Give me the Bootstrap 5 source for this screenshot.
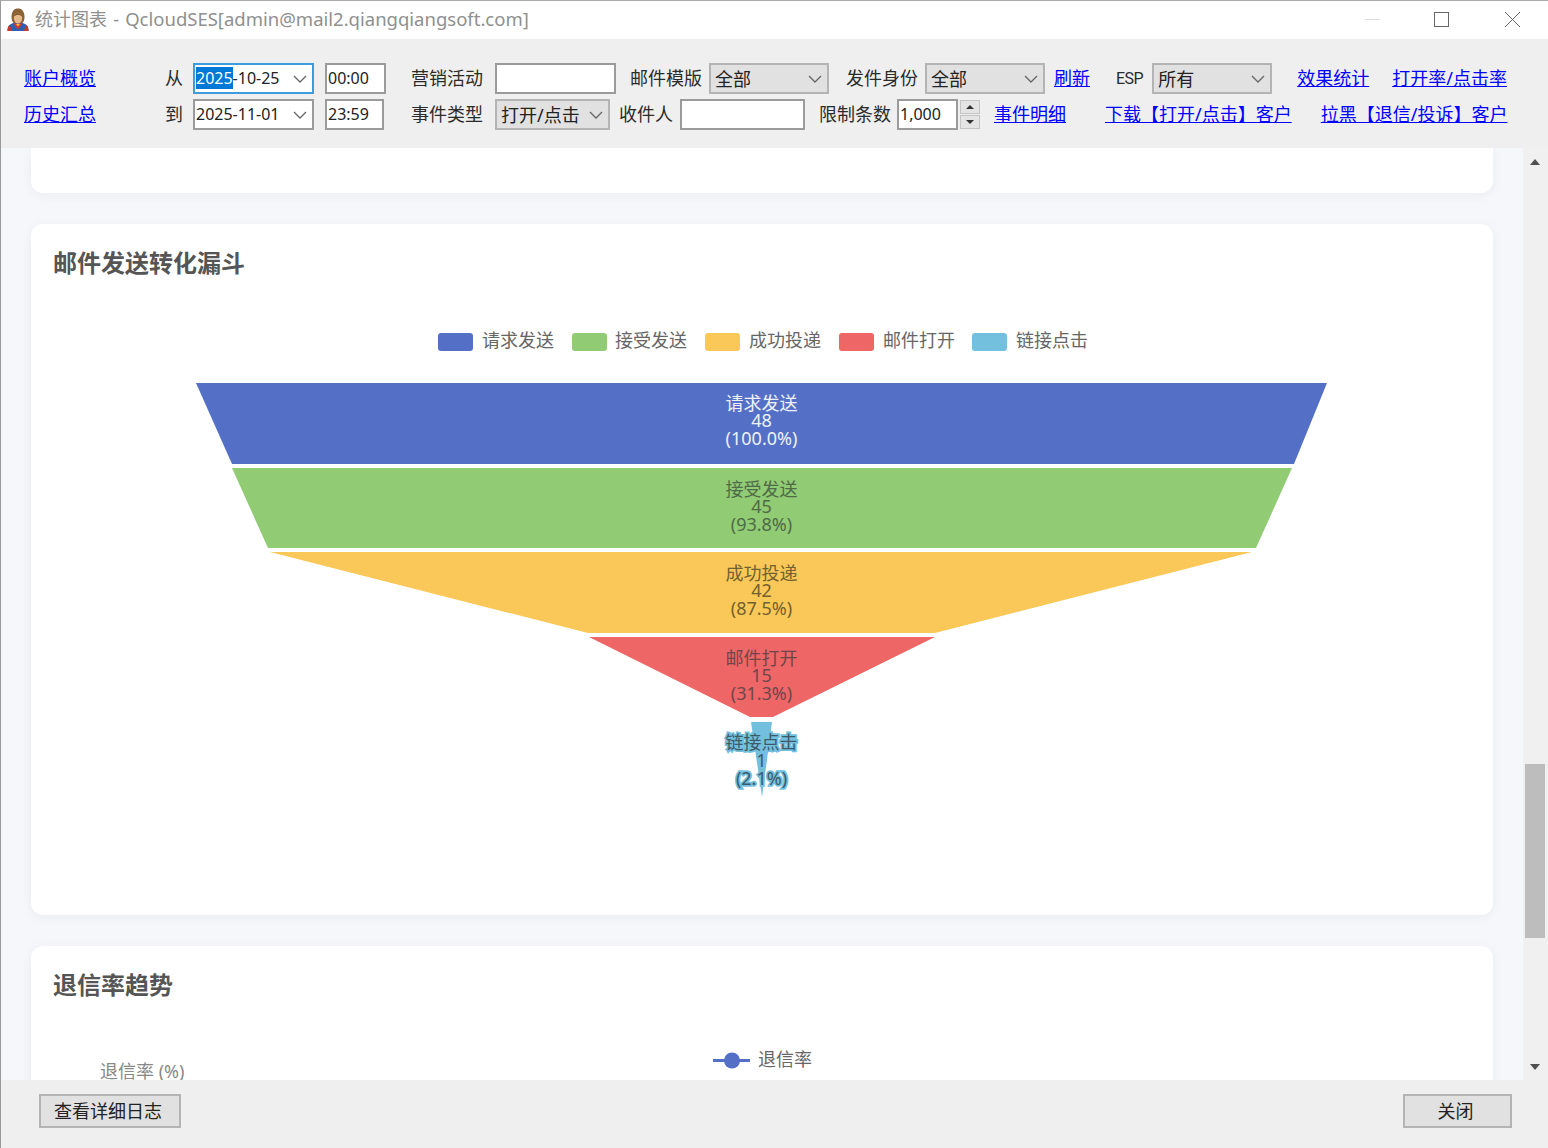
<!DOCTYPE html>
<html lang="zh-CN">
<head>
  <meta charset="UTF-8">
  <title>统计图表 - QcloudSES</title>
  <link rel="stylesheet" href="https://cdn.jsdelivr.net/npm/bootstrap@5.3.0/dist/css/bootstrap.min.css">
  <script src="https://cdn.jsdelivr.net/npm/bootstrap@5.3.0/dist/js/bootstrap.bundle.min.js"></script>
  <style>
    html, body { height: 100%; margin: 0; overflow: hidden; }
    body { font-family: "Noto Sans", "Noto Sans CJK SC", sans-serif; font-size: 18px; line-height: 1.2; color: #2b2b2b; }
    .win { width: 1548px; height: 1148px; border-left: 1px solid #999; border-top: 1px solid #aaa; }

    /* title bar */
    .titlebar { height: 38px; background: #fff; color: #8f8f8f; padding: 0 25px 0 6px; flex-shrink: 0; }
    .titlebar svg { flex-shrink: 0; }
    .app-name { margin-left: 6px; margin-bottom: 2px; word-spacing: 1.500px; }
    .app-latin { font-size: 18.500px; }
    .win-ctl { margin-left: auto; }

    /* toolbar */
    .toolbar { height: 109px; background: #efefef; padding: 24px 0 0 23px; flex-shrink: 0; }
    .tb-row { height: 31px; margin-bottom: 5px; }
    .tb-row > * { flex-shrink: 0; }
    .tb-link, .tb-link:hover { color: #0000ff; text-decoration: underline; }
    .tb-input { height: 31px; border: 2px solid #9b9b9b; background: #fff; font-size: 16px; padding: 0 1px; line-height: 27px; color: #222; box-sizing: border-box; }
    .tb-date { width: 121px; display: flex; align-items: center; justify-content: space-between; padding-right: 5px; }
    .tb-date.is-active { border-color: #3d9be0; }
    .sel-part { background: #0078d7; color: #fff; }
    .tb-select.form-select { height: 31px; border: 2px solid #b4b4b4; border-radius: 0; background-color: #e1e1e1; font-size: 18px; line-height: 27px; padding: 1px 20px 0 4px; color: #222; box-shadow: none; background-image: url("data:image/svg+xml,%3csvg xmlns='http://www.w3.org/2000/svg' viewBox='0 0 14 8'%3e%3cpath fill='none' stroke='%23666' stroke-width='1.300' d='M1 1l6 6 6-6'/%3e%3c/svg%3e"); background-size: 14px 8px; background-position: right 5px center; }
    .w59 { width: 59px; } .w61 { width: 61px; } .w115 { width: 115px !important; } .w120 { width: 120px !important; } .w121 { width: 121px; } .w125 { width: 125px; }
    .esp { font-family: Roboto, sans-serif; font-size: 16px; letter-spacing: -.5px; }
    .spin { width: 20px; height: 29px; gap: 1px; }
    .spin-btn { height: 14px; background: #e4e4e4; border: 1px solid #c4c4c4; }
    .tri-up { width: 0; height: 0; border-left: 4px solid transparent; border-right: 4px solid transparent; border-bottom: 4px solid #333; }
    .tri-down { width: 0; height: 0; border-left: 4px solid transparent; border-right: 4px solid transparent; border-top: 4px solid #333; }
    .m2 { margin-left: 2px; } .m6 { margin-left: 6px; } .m7 { margin-left: 7px; } .m8 { margin-left: 8px; } .m9 { margin-left: 9px; } .m10 { margin-left: 10px; }
    .m11 { margin-left: 11px; } .m12 { margin-left: 12px; } .m14 { margin-left: 14px; }
    .m17 { margin-left: 17px; } .m23 { margin-left: 23px; } .m25 { margin-left: 25px; } .m26 { margin-left: 26px; }
    .m27 { margin-left: 27px; } .m29 { margin-left: 29px; } .m39 { margin-left: 39px; } .m69 { margin-left: 69px; }

    /* scrolled report */
    .middle { height: 932px; flex-shrink: 0; }
    .report { width: 1522px; background: #f5f7fa; padding: 0 30px; overflow: hidden; }
    .panel { background: #fff; border: 0; border-radius: 12px; box-shadow: 0 2px 12px rgba(0, 0, 0, .05); }
    .panel-stub { height: 45px; margin-bottom: 31px; border-top-left-radius: 0; border-top-right-radius: 0; }
    .panel-funnel { height: 691px; margin-bottom: 31px; }
    .panel-trend { height: 300px; }
    .panel-title { height: 72px; margin: 0; padding: 24px 0 0 22px; font-size: 24px; line-height: 30px; font-weight: 700; color: #555; }
    .panel svg { display: block; }
    .chart-text { font-family: "Noto Sans", "Noto Sans CJK SC", sans-serif; font-size: 18px; }

    /* scrollbar */
    .vbar { width: 25px; background: #f0f0f0; padding: 11px 3px 10px 2px; }
    .vbar-thumb { height: 174px; background: #bdbdbd; margin-top: 599px; }
    .arrow-up { width: 0; height: 0; border-left: 5px solid transparent; border-right: 5px solid transparent; border-bottom: 6px solid #505050; }
    .arrow-down { width: 0; height: 0; border-left: 5px solid transparent; border-right: 5px solid transparent; border-top: 6px solid #505050; }

    /* footer */
    .footbar { height: 68px; background: #efefef; padding: 14px 36px 0 38px; }
    .win-btn.btn { height: 34px; background: #e1e1e1; border: 2px solid #b4b4b4; border-radius: 0; font-size: 18px; line-height: 26px; padding: 0 4px 0 0; color: #222; }
    .btn-log { width: 142px; }
    .btn-close-win { width: 109px; }
  </style>
</head>
<body>
<div class="win d-flex flex-column">

  <div class="titlebar d-flex align-items-center">
    <svg width="22" height="24" viewBox="0 0 22 24">
      <path d="M0.500 23c0-5 2-7 6-8h9c4 1 6 3 6 8z" fill="#2f5fb0"/>
      <path d="M0.500 23c0-3 .5-5 2-6l3 6zM21.500 23c0-3-.5-5-2-6l-3 6z" fill="#c23b30"/>
      <path d="M6.500 15.500h9l-4.500 6z" fill="#d8362a"/>
      <path d="M9 16h4l-2 2.500z" fill="#f2c230"/>
      <path d="M4.500 9C4.500 3 7.500.500 11 .500S17.500 3 17.500 9c0 3-1 5-2 6h-9c-1-1-2-3-2-6z" fill="#8a6033"/>
      <ellipse cx="11" cy="10" rx="4.200" ry="5.500" fill="#e6b98a"/>
      <path d="M6.500 9c.5-3 2.500-4.500 4.500-4.500s4 1.500 4.500 4.500c-1.500-1.500-3-2-4.500-2s-3 .5-4.500 2z" fill="#8a6033"/>
    </svg>
    <span class="app-name">统计图表 - <span class="app-latin">QcloudSES[admin@mail2.qiangqiangsoft.com]</span></span>
    <svg class="win-ctl" width="176" height="20" viewBox="0 0 176 20">
      <path d="M18 9.500h15" stroke="#ddd" fill="none"/>
      <rect x="87.500" y="2.500" width="14" height="14" stroke="#666" fill="none"/>
      <path d="M158 2l15 15M173 2l-15 15" stroke="#666" fill="none"/>
    </svg>
  </div>

  <div class="toolbar">
    <div class="tb-row d-flex align-items-center text-nowrap">
      <a class="tb-link" href="#">账户概览</a>
      <span class="m69">从</span>
      <div class="tb-input tb-date is-active m10"><span><span class="sel-part">2025</span>-10-25</span><svg width="14" height="8" viewBox="0 0 14 8"><path d="M1 1l6 6 6-6" stroke="#666" fill="none" stroke-width="1.300"/></svg></div>
      <div class="tb-input w61 m11">00:00</div>
      <span class="m25">营销活动</span>
      <input class="tb-input w121 m12" type="text">
      <span class="m14">邮件模版</span>
      <select class="form-select tb-select w120 m7"><option>全部</option></select>
      <span class="m17">发件身份</span>
      <select class="form-select tb-select w120 m7"><option>全部</option></select>
      <a class="tb-link m9" href="#">刷新</a>
      <span class="esp m26">ESP</span>
      <select class="form-select tb-select w120 m9"><option>所有</option></select>
      <a class="tb-link m25" href="#">效果统计</a>
      <a class="tb-link m23" href="#">打开率/点击率</a>
    </div>
    <div class="tb-row d-flex align-items-center text-nowrap">
      <a class="tb-link" href="#">历史汇总</a>
      <span class="m69">到</span>
      <div class="tb-input tb-date m10"><span>2025-11-01</span><svg width="14" height="8" viewBox="0 0 14 8"><path d="M1 1l6 6 6-6" stroke="#666" fill="none" stroke-width="1.300"/></svg></div>
      <div class="tb-input w59 m11">23:59</div>
      <span class="m27">事件类型</span>
      <select class="form-select tb-select w115 m12"><option>打开/点击</option></select>
      <span class="m9">收件人</span>
      <input class="tb-input w125 m7" type="text">
      <span class="m14">限制条数</span>
      <div class="tb-input w61 m6">1,000</div>
      <div class="spin d-flex flex-column m2">
        <div class="spin-btn d-flex align-items-center justify-content-center"><div class="tri-up"></div></div>
        <div class="spin-btn d-flex align-items-center justify-content-center"><div class="tri-down"></div></div>
      </div>
      <a class="tb-link m14" href="#">事件明细</a>
      <a class="tb-link m39" href="#">下载【打开/点击】客户</a>
      <a class="tb-link m29" href="#">拉黑【退信/投诉】客户</a>
    </div>
  </div>

  <div class="middle d-flex">
    <div class="report">
      <div class="card panel panel-stub"></div>

      <div class="card panel panel-funnel">
        <h5 class="panel-title">邮件发送转化漏斗</h5>
        <svg width="1461" height="619" viewBox="31 296 1461 619" class="chart-text">
          <g>
            <rect x="438" y="333" width="35" height="18" rx="3" fill="#5470c6"/>
            <rect x="572" y="333" width="35" height="18" rx="3" fill="#91cc75"/>
            <rect x="705" y="333" width="35" height="18" rx="3" fill="#fac858"/>
            <rect x="839" y="333" width="35" height="18" rx="3" fill="#ee6666"/>
            <rect x="972" y="333" width="35" height="18" rx="3" fill="#73c0de"/>
          </g>
          <g fill="#666" dominant-baseline="central">
            <text x="482" y="340">请求发送</text>
            <text x="615" y="340">接受发送</text>
            <text x="749" y="340">成功投递</text>
            <text x="883" y="340">邮件打开</text>
            <text x="1016" y="340">链接点击</text>
          </g>

          <polygon points="196,383 1327,383 1294,464 232,464" fill="#5470c6"/>
          <polygon points="232,468 1292,468 1256,548 268,548" fill="#91cc75"/>
          <polygon points="270,552 1252,552 935,633 588,633" fill="#fac858"/>
          <polygon points="589,637 935,637 773,717 750,717" fill="#ee6666"/>
          <polygon points="751,722 772,722 762,797" fill="#73c0de"/>

          <g text-anchor="middle" dominant-baseline="central">
            <g fill="#eef1fa">
              <text x="761.500" y="403">请求发送</text>
              <text x="761.500" y="420">48</text>
              <text x="761.500" y="438">(100.0%)</text>
            </g>
            <g fill="#4f6a46">
              <text x="761.500" y="489">接受发送</text>
              <text x="761.500" y="506">45</text>
              <text x="761.500" y="524">(93.8%)</text>
            </g>
            <g fill="#72602f">
              <text x="761.500" y="573">成功投递</text>
              <text x="761.500" y="590">42</text>
              <text x="761.500" y="608">(87.5%)</text>
            </g>
            <g fill="#70464a">
              <text x="761.500" y="658">邮件打开</text>
              <text x="761.500" y="675">15</text>
              <text x="761.500" y="693">(31.3%)</text>
            </g>
            <g fill="#3c5a6a" stroke="#73c0de" stroke-width="3.500" paint-order="stroke">
              <text x="761.500" y="742">链接点击</text>
              <text x="761.500" y="760">1</text>
              <text x="761.500" y="778">(2.1%)</text>
            </g>
          </g>
        </svg>
      </div>

      <div class="card panel panel-trend">
        <h5 class="panel-title">退信率趋势</h5>
        <svg width="1461" height="62" viewBox="31 1018 1461 62" class="chart-text">
          <text x="100" y="1071" fill="#888" dominant-baseline="central">退信率 (%)</text>
          <path d="M713 1060.500h37" stroke="#5470c6" stroke-width="3"/>
          <circle cx="732" cy="1060.500" r="8" fill="#5470c6"/>
          <text x="758" y="1059" fill="#666" dominant-baseline="central">退信率</text>
        </svg>
      </div>
    </div>

    <div class="vbar d-flex flex-column align-items-center">
      <div class="arrow-up"></div>
      <div class="vbar-thumb w-100"></div>
      <div class="arrow-down mt-auto"></div>
    </div>
  </div>

  <div class="footbar d-flex justify-content-between align-items-start">
    <button type="button" class="btn win-btn btn-log">查看详细日志</button>
    <button type="button" class="btn win-btn btn-close-win">关闭</button>
  </div>
</div>
</body>
</html>
